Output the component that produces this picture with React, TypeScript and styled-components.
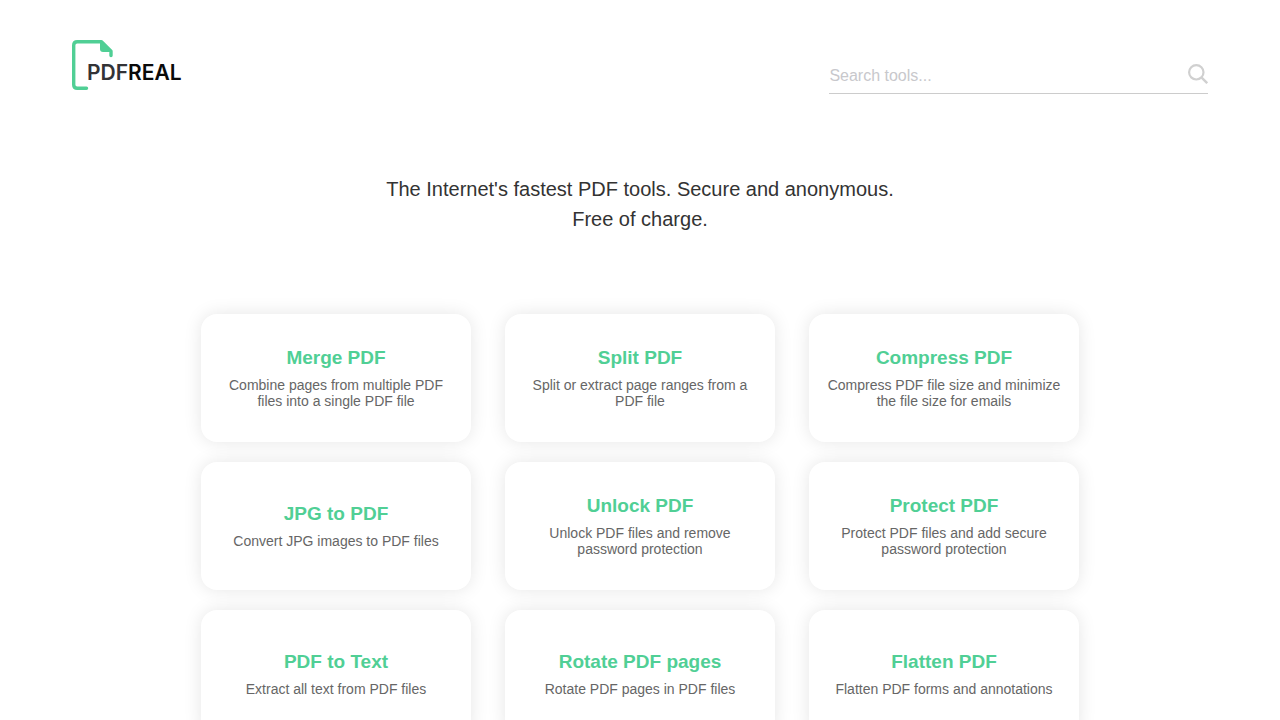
import React, { useState } from 'react';
import styled, { createGlobalStyle } from 'styled-components';

const GlobalStyle = createGlobalStyle`
  *, *::before, *::after { box-sizing: border-box; }
  body {
    margin: 0;
    background: #fff;
    color: #333;
    font-family: "Liberation Sans", Arial, Helvetica, sans-serif;
  }
`;

const Page = styled.div`
  padding: 40px 0;
`;

const Header = styled.header`
  display: flex;
  align-items: flex-start;
  justify-content: space-between;
  gap: 32px;
  padding: 0 72px;
`;

const LogoLink = styled.a`
  display: block;
  flex: none;
`;

const LogoImage = styled.svg`
  display: block;
  width: 112px;
  height: 50px;
  overflow: visible;
`;

const LogoText = styled.text`
  font-family: Inter, sans-serif;
  font-optical-sizing: none;
  font-size: 21px;
  font-weight: 600;
  fill: #333336;
`;

const LogoStrong = styled.tspan`
  fill: #0a0a0a;
`;

const SearchForm = styled.form`
  display: flex;
  align-items: center;
  width: 33.33%;
  min-width: 200px;
  height: 36px;
  margin-top: 18px;
  border-bottom: 1px solid #ccc;
`;

const SearchInput = styled.input`
  flex: 1;
  min-width: 0;
  height: 35px;
  padding: 0;
  border: 0;
  outline: 0;
  background: transparent;
  color: #333;
  font-family: inherit;
  font-size: 16px;

  &::placeholder {
    color: #c8c8cc;
    opacity: 1;
  }
`;

const SearchButton = styled.button`
  display: flex;
  padding: 0;
  margin-bottom: 4px;
  border: 0;
  background: none;
  cursor: pointer;
`;

const Tagline = styled.h1`
  margin: 80px 24px;
  font-size: 20px;
  font-weight: 400;
  line-height: 30px;
  text-align: center;
`;

const ToolGrid = styled.main`
  display: grid;
  grid-template-columns: repeat(auto-fit, 270px);
  justify-content: center;
  gap: 20px 34px;
  max-width: 878px;
  margin: 0 auto;
`;

const ToolCard = styled.a`
  display: flex;
  flex-direction: column;
  align-items: center;
  justify-content: center;
  gap: 7px;
  min-height: 128px;
  padding: 16px 16px 17px;
  border-radius: 16px;
  background: #fff;
  box-shadow: 0 0 18px rgba(0, 0, 0, 0.1);
  text-align: center;
  text-decoration: none;
`;

const ToolName = styled.h2`
  margin: 0;
  color: #50cf95;
  font-size: 19px;
  font-weight: 700;
  line-height: 24px;
`;

const ToolText = styled.p`
  margin: 0;
  color: #666;
  font-size: 14px;
  line-height: 16px;
`;

const tools = [
  { name: 'Merge PDF', text: 'Combine pages from multiple PDF files into a single PDF file' },
  { name: 'Split PDF', text: 'Split or extract page ranges from a PDF file' },
  { name: 'Compress PDF', text: 'Compress PDF file size and minimize the file size for emails' },
  { name: 'JPG to PDF', text: 'Convert JPG images to PDF files' },
  { name: 'Unlock PDF', text: 'Unlock PDF files and remove password protection' },
  { name: 'Protect PDF', text: 'Protect PDF files and add secure password protection' },
  { name: 'PDF to Text', text: 'Extract all text from PDF files' },
  { name: 'Rotate PDF pages', text: 'Rotate PDF pages in PDF files' },
  { name: 'Flatten PDF', text: 'Flatten PDF forms and annotations' },
];

function Logo() {
  return (
    <LogoImage viewBox="0 0 112 50" role="img" aria-label="PDFREAL">
      <path
        d="M14.5 48.3H5.2Q1.7 48.3 1.7 44.8V5.2Q1.7 1.7 5.2 1.7H29.5L39 11.2V15.5"
        fill="none"
        stroke="#50cf95"
        strokeWidth="3.4"
        strokeLinecap="round"
        strokeLinejoin="round"
      />
      <path d="M28 1.5L40 12H31Q28 12 28 9Z" fill="#50cf95" />
      <LogoText x="15" y="40">
        PDF<LogoStrong>REAL</LogoStrong>
      </LogoText>
    </LogoImage>
  );
}

export default function App() {
  const [query, setQuery] = useState('');
  const shown = tools.filter((tool) =>
    `${tool.name} ${tool.text}`.toLowerCase().includes(query.toLowerCase()),
  );

  return (
    <Page>
      <GlobalStyle />
      <Header>
        <LogoLink href="#">
          <Logo />
        </LogoLink>
        <SearchForm role="search" onSubmit={(event) => event.preventDefault()}>
          <SearchInput
            type="text"
            aria-label="Search tools"
            placeholder="Search tools..."
            value={query}
            onChange={(event) => setQuery(event.target.value)}
          />
          <SearchButton type="submit" aria-label="Search">
            <svg width="20" height="20" viewBox="0 0 20 20" fill="none" stroke="#d0d0d0" strokeWidth="2.2">
              <circle cx="8.3" cy="8.3" r="7.2" />
              <path d="M13.4 13.4L19.2 19.2" strokeWidth="2.4" />
            </svg>
          </SearchButton>
        </SearchForm>
      </Header>
      <Tagline>
        The Internet's fastest PDF tools. Secure and anonymous.
        <br />
        Free of charge.
      </Tagline>
      <ToolGrid>
        {shown.map((tool) => (
          <ToolCard key={tool.name} href="#">
            <ToolName>{tool.name}</ToolName>
            <ToolText>{tool.text}</ToolText>
          </ToolCard>
        ))}
      </ToolGrid>
    </Page>
  );
}
